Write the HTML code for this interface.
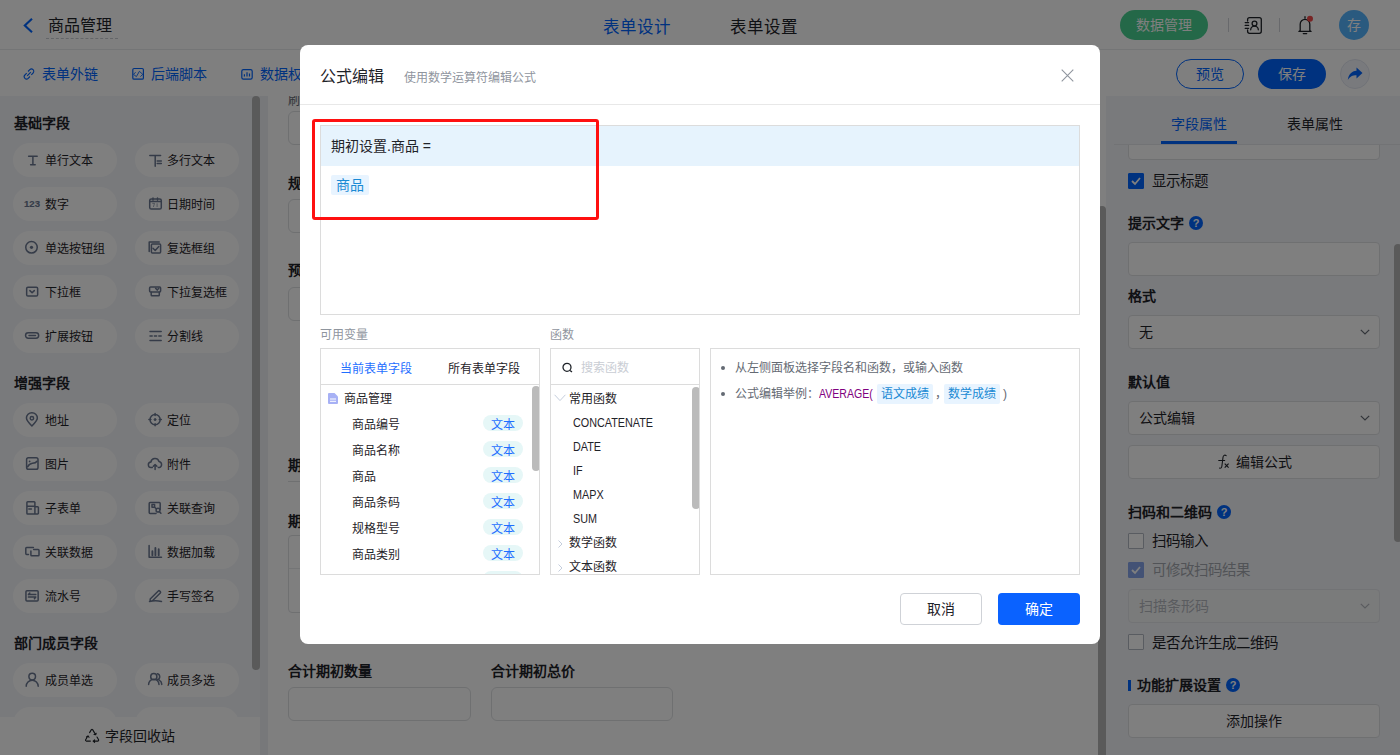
<!DOCTYPE html><html lang="zh-CN"><head><meta charset="utf-8"><style>
*{box-sizing:border-box;margin:0;padding:0}
html,body{width:1400px;height:755px;overflow:hidden;background:#fff;font-family:"Liberation Sans",sans-serif;color:#1f2329}
.a{position:absolute}
svg{display:block;overflow:visible}
.nw{white-space:nowrap}
.t12{font-size:12px;line-height:18px;white-space:nowrap}
.t13{font-size:13px;line-height:18px;white-space:nowrap}
.t14{font-size:14px;line-height:20px;white-space:nowrap}
.t16{font-size:16px;line-height:22px;white-space:nowrap}
.blue{color:#0064ff}
.chip{position:absolute;width:104px;height:34px;border-radius:17px;background:#fff}
.chip svg{position:absolute;left:11px;top:9px}
.chip span{position:absolute;left:32px;top:9px;font-size:12px;line-height:18px;color:#1f2329;white-space:nowrap}
.sec{position:absolute;left:14px;font-size:14px;font-weight:bold;line-height:20px;color:#1f2329;white-space:nowrap}
.inp{position:absolute;border:1px solid #dee0e3;border-radius:6px;background:#fff}
.lbl{position:absolute;font-size:14px;font-weight:bold;line-height:20px;color:#1f2329;white-space:nowrap}
.cb{position:absolute;width:16px;height:16px;border:1px solid #b3b8c2;border-radius:1px;background:#fff}
.q{position:absolute;width:14px;height:14px;border-radius:7px;background:#0064ff;color:#fff;font-size:11px;font-weight:bold;line-height:14px;text-align:center}
.chev{position:absolute}
.tag{position:absolute;width:40px;height:16px;border-radius:8px;background:#e6f7f7;color:#1f6fff;font-size:12px;line-height:20px;text-align:center;overflow:visible}
.vrow{position:absolute;left:31px;font-size:12px;line-height:18px;color:#1f2329;white-space:nowrap}
.fn{position:absolute;left:22px;transform:scaleX(.9);transform-origin:0 0;font-size:12px;line-height:18px;color:#1f2329;white-space:nowrap}
</style></head><body>
<div class="a" style="left:0;top:0;width:1400px;height:50px;background:#fff;border-bottom:1px solid #e8eaed"></div>
<svg class="a" style="left:22px;top:17px" width="12" height="17" viewBox="0 0 12 17"><path d="M10 1.8L2.8 8.5 10 15.2" fill="none" stroke="#0064ff" stroke-width="2.1"/></svg>
<div class="a t16" style="left:48px;top:15px">商品管理</div>
<div class="a" style="left:46px;top:38px;width:72px;border-top:1px dashed #c9ccd2"></div>
<div class="a t16 blue" style="left:603px;top:16px;font-size:16.5px">表单设计</div>
<div class="a t16" style="left:730px;top:16px;font-size:16.5px">表单设置</div>
<div class="a" style="left:1120px;top:10px;width:88px;height:30px;border-radius:15px;background:#48d090"></div>
<div class="a t14" style="left:1136px;top:15px;color:#fff">数据管理</div>
<div class="a" style="left:1228px;top:18px;width:1px;height:14px;background:#d0d3d8"></div>
<div class="a" style="left:1279px;top:18px;width:1px;height:14px;background:#d0d3d8"></div>
<svg class="a" style="left:1240px;top:12px" width="26" height="26" viewBox="1240 12 26 26"><path d="M1247.6 21V19.6a2 2 0 0 1 2-2h9.7a2 2 0 0 1 2 2v11.7a2 2 0 0 1-2 2h-9.7a2 2 0 0 1-2-2V30M1245.2 22.6h3.4M1245.2 25.4h3.4M1245.2 28.3h3.4" fill="none" stroke="#1f2329" stroke-width="1.3" stroke-linecap="round"/><circle cx="1254.5" cy="23.6" r="2.4" fill="none" stroke="#1f2329" stroke-width="1.3"/><path d="M1250.7 29.8a3.8 3.6 0 0 1 7.6 0" fill="none" stroke="#1f2329" stroke-width="1.3" stroke-linecap="round"/></svg>
<svg class="a" style="left:1292px;top:12px" width="26" height="26" viewBox="1292 12 26 26"><path d="M1300.2 30.4V24.2a4.8 4.8 0 0 1 9.6 0v6.2l1.3 1H1298.9z" fill="none" stroke="#1f2329" stroke-width="1.3" stroke-linejoin="round"/><path d="M1305 16.7v1.5M1303.3 33.6h3.4" stroke="#1f2329" stroke-width="1.3" stroke-linecap="round"/><circle cx="1310" cy="18.8" r="3" fill="#f04848"/></svg>
<div class="a" style="left:1339px;top:10px;width:30px;height:30px;border-radius:15px;background:#54b4ff"></div>
<div class="a t14" style="left:1347px;top:15px;color:#fff">存</div>
<div class="a" style="left:0;top:51px;width:1400px;height:45px;background:#fff"></div>
<svg class="a" style="left:23px;top:68px" width="12" height="12" viewBox="0 0 12 12"><path d="M5 3.5l1.8-1.8a2.3 2.3 0 0 1 3.3 3.3L8.3 6.8M7 8.5L5.2 10.3a2.3 2.3 0 0 1-3.3-3.3L3.7 5.2M4.2 7.8l3.6-3.6" fill="none" stroke="#0064ff" stroke-width="1.1"/></svg>
<div class="a t14 blue" style="left:42px;top:64px">表单外链</div>
<svg class="a" style="left:130px;top:66px" width="16" height="16" viewBox="130 66 16 16"><rect x="132.8" y="68.5" width="10.6" height="10.7" rx="1.3" fill="none" stroke="#0064ff" stroke-width="1.2"/><path d="M135.6 72.2L133.5 74.4 136.4 76.6 139.4 71.3 142.8 74.4 140.4 76.6" fill="none" stroke="#0064ff" stroke-width="0.9" stroke-linejoin="round"/></svg>
<div class="a t14 blue" style="left:151px;top:64px">后端脚本</div>
<svg class="a" style="left:239px;top:66px" width="16" height="16" viewBox="239 66 16 16"><rect x="241.8" y="69.6" width="10.4" height="9.6" rx="1.6" fill="none" stroke="#0064ff" stroke-width="1.2"/><path d="M244.4 74.3v2.3M247 72.3v4.3M249.5 73.5v3.1" stroke="#0064ff" stroke-width="1.2"/></svg>
<div class="a t14 blue" style="left:260px;top:64px">数据权限</div>
<div class="a" style="left:1176px;top:59px;width:68px;height:30px;border-radius:15px;border:1.5px solid #0064ff"></div>
<div class="a t14 blue" style="left:1196px;top:64px">预览</div>
<div class="a" style="left:1258px;top:59px;width:68px;height:30px;border-radius:15px;background:#0064ff"></div>
<div class="a t14" style="left:1278px;top:64px;color:#fff">保存</div>
<div class="a" style="left:1340px;top:59px;width:30px;height:30px;border-radius:15px;background:#f3f5fb;border:1px solid #e1e5ef"></div>
<svg class="a" style="left:1347px;top:67px" width="16" height="14" viewBox="0 0 16 14"><path d="M9.5 0.5L15.5 6 9.5 11.5V8.3C5.5 8.3 3 9.5 0.8 13 1.5 7.5 4.5 4.2 9.5 3.8z" fill="#0064ff"/></svg>
<div class="a" style="left:0;top:96px;width:260px;height:659px;background:#f3f5f9"></div>
<div class="a" style="left:260px;top:96px;width:8px;height:659px;background:#eff1f4"></div>
<div class="sec" style="top:113px">基础字段</div>
<div class="sec" style="top:373px">增强字段</div>
<div class="sec" style="top:633px">部门成员字段</div>
<div class="chip" style="left:13px;top:143px"><svg width="16" height="16" viewBox="0 0 16 16"><path d="M4.6 4.2h8.6M8.9 4.2v8.6M6.6 12.8h4.6" fill="none" stroke="#6a7790" stroke-width="1.5" stroke-linecap="round" stroke-linejoin="round"/></svg><span>单行文本</span></div>
<div class="chip" style="left:135px;top:143px"><svg width="16" height="16" viewBox="0 0 16 16"><path d="M3.8 3.4h10.8M9.2 3.4v10.8M11.2 9.1h4.1M11.2 11.6h4.1" fill="none" stroke="#6a7790" stroke-width="1.5" stroke-linecap="round" stroke-linejoin="round"/></svg><span>多行文本</span></div>
<div class="chip" style="left:13px;top:187px"><svg width="16" height="16" viewBox="0 0 16 16"><text x="0" y="11" font-size="9.6" font-weight="bold" fill="#6a7790" stroke="#6a7790" stroke-width="0.15" font-family="Liberation Sans">123</text></svg><span>数字</span></div>
<div class="chip" style="left:135px;top:187px"><svg width="16" height="16" viewBox="0 0 16 16"><rect x="3.7" y="2.9" width="11.6" height="10.2" rx="1.6" fill="none" stroke="#6a7790" stroke-width="1.5" stroke-linecap="round" stroke-linejoin="round"/><path d="M3.7 5.4h11.6M7 1.9v2M11.5 1.9v2" fill="none" stroke="#6a7790" stroke-width="1.5" stroke-linecap="round" stroke-linejoin="round"/><path d="M6.3 7.4h2.2L7.4 11M11.1 7.3v3.7" fill="none" stroke="#6a7790" stroke-width="0.8" opacity="0.8"/></svg><span>日期时间</span></div>
<div class="chip" style="left:13px;top:231px"><svg width="16" height="16" viewBox="0 0 16 16"><circle cx="7.5" cy="7.3" r="5.75" fill="none" stroke="#6a7790" stroke-width="1.5" stroke-linecap="round" stroke-linejoin="round"/><circle cx="7.5" cy="7.3" r="1.6" fill="#6a7790"/></svg><span>单选按钮组</span></div>
<div class="chip" style="left:135px;top:231px"><svg width="16" height="16" viewBox="0 0 16 16"><path d="M3.2 11.5V2h10" fill="none" stroke="#6a7790" stroke-width="1.5" stroke-linecap="round" stroke-linejoin="round"/><rect x="5.4" y="4.1" width="9.2" height="8.8" rx="1" fill="none" stroke="#6a7790" stroke-width="1.5" stroke-linecap="round" stroke-linejoin="round"/><path d="M7 8.3l2.2 2.2 3.6-3.9" fill="none" stroke="#6a7790" stroke-width="1.5" stroke-linecap="round" stroke-linejoin="round"/></svg><span>复选框组</span></div>
<div class="chip" style="left:13px;top:275px"><svg width="16" height="16" viewBox="0 0 16 16"><rect x="2.65" y="3.15" width="11" height="8.8" rx="1.3" fill="none" stroke="#6a7790" stroke-width="1.5" stroke-linecap="round" stroke-linejoin="round"/><path d="M5.9 6.6l2.2 2.2 2.2-2.2" fill="none" stroke="#6a7790" stroke-width="1.5" stroke-linecap="round" stroke-linejoin="round"/></svg><span>下拉框</span></div>
<div class="chip" style="left:135px;top:275px"><svg width="16" height="16" viewBox="0 0 16 16"><rect x="3.6" y="3.1" width="11" height="4.8" rx="1" fill="none" stroke="#6a7790" stroke-width="1.5" stroke-linecap="round" stroke-linejoin="round"/><path d="M5.2 8.2v2.8a0.8 0.8 0 0 0 .8.8h6.5a0.8 0.8 0 0 0 .8-.8V8.2" fill="none" stroke="#6a7790" stroke-width="1.5" stroke-linecap="round" stroke-linejoin="round"/><path d="M9.6 4.3l1.6 1.8 1.6-1.8" fill="none" stroke="#6a7790" stroke-width="1.5" stroke-linecap="round" stroke-linejoin="round"/></svg><span>下拉复选框</span></div>
<div class="chip" style="left:13px;top:319px"><svg width="16" height="16" viewBox="0 0 16 16"><rect x="1.55" y="4.85" width="13.1" height="5.4" rx="2.7" fill="none" stroke="#6a7790" stroke-width="1.5" stroke-linecap="round" stroke-linejoin="round"/><path d="M5 7.6h6.5" fill="none" stroke="#6a7790" stroke-width="1.5" stroke-linecap="round" stroke-linejoin="round"/></svg><span>扩展按钮</span></div>
<div class="chip" style="left:135px;top:319px"><svg width="16" height="16" viewBox="0 0 16 16"><path d="M4 3.6h11.2M4 12.4h11.2M4 8.1h2.2M8.4 8.1h2.2M12.8 8.1h2.4" fill="none" stroke="#6a7790" stroke-width="1.5" stroke-linecap="round" stroke-linejoin="round"/></svg><span>分割线</span></div>
<div class="chip" style="left:13px;top:403px"><svg width="16" height="16" viewBox="0 0 16 16"><path d="M7.9 14C4.8 11 2.45 8.6 2.45 6.1a5.45 5.45 0 0 1 10.9 0c0 2.5-2.35 4.9-5.45 7.9z" fill="none" stroke="#6a7790" stroke-width="1.5" stroke-linecap="round" stroke-linejoin="round"/><circle cx="7.9" cy="6.3" r="1.7" fill="none" stroke="#6a7790" stroke-width="1.5" stroke-linecap="round" stroke-linejoin="round"/></svg><span>地址</span></div>
<div class="chip" style="left:135px;top:403px"><svg width="16" height="16" viewBox="0 0 16 16"><circle cx="9.1" cy="7.6" r="5.1" fill="none" stroke="#6a7790" stroke-width="1.5" stroke-linecap="round" stroke-linejoin="round"/><circle cx="9.1" cy="7.6" r="1" fill="#6a7790" stroke="#6a7790"/><path d="M9.1 1.4v2M9.1 11.8v2M2.9 7.6h2M13.3 7.6h2" fill="none" stroke="#6a7790" stroke-width="1.5" stroke-linecap="round" stroke-linejoin="round"/></svg><span>定位</span></div>
<div class="chip" style="left:13px;top:447px"><svg width="16" height="16" viewBox="0 0 16 16"><rect x="2.6" y="1.75" width="11.4" height="11.5" rx="1.8" fill="none" stroke="#6a7790" stroke-width="1.5" stroke-linecap="round" stroke-linejoin="round"/><path d="M3.6 10.8C5 8 6.5 7.5 8.5 7.3 10.5 7.1 12 6.6 13 5.2" fill="none" stroke="#6a7790" stroke-width="1.5" stroke-linecap="round" stroke-linejoin="round"/><circle cx="5.6" cy="5.4" r="0.9" fill="#6a7790"/></svg><span>图片</span></div>
<div class="chip" style="left:135px;top:447px"><svg width="16" height="16" viewBox="0 0 16 16"><path d="M6.3 11.6H5.4a2.8 2.8 0 0 1-.5-5.6 4.2 4.2 0 0 1 8.1-.6 3.2 3.2 0 0 1 .3 6.2h-1M9.1 13.5V8.6M7.3 10.3l1.8-1.8 1.8 1.8" fill="none" stroke="#6a7790" stroke-width="1.5" stroke-linecap="round" stroke-linejoin="round"/></svg><span>附件</span></div>
<div class="chip" style="left:13px;top:491px"><svg width="16" height="16" viewBox="0 0 16 16"><path d="M10.9 6.8V2.6a0.8 0.8 0 0 0-.8-.8H3.7a0.8 0.8 0 0 0-.8.8v10.6a0.8 0.8 0 0 0 .8.8h9.9a0.8 0.8 0 0 0 .8-.8V7.6a0.8 0.8 0 0 0-.8-.8h-2.7v7.2M2.9 6.3h8M4.8 8.9h2.6" fill="none" stroke="#6a7790" stroke-width="1.5" stroke-linecap="round" stroke-linejoin="round"/></svg><span>子表单</span></div>
<div class="chip" style="left:135px;top:491px"><svg width="16" height="16" viewBox="0 0 16 16"><path d="M10 13.4H4a0.8 0.8 0 0 1-.8-.8V3.4a0.8 0.8 0 0 1 .8-.8h9.4a0.8 0.8 0 0 1 .8.8v6" fill="none" stroke="#6a7790" stroke-width="1.5" stroke-linecap="round" stroke-linejoin="round"/><rect x="6" y="4.5" width="2.6" height="2.8" fill="none" stroke="#6a7790" stroke-width="1.5" stroke-linecap="round" stroke-linejoin="round"/><circle cx="12" cy="10.2" r="1.9" fill="none" stroke="#6a7790" stroke-width="1.5" stroke-linecap="round" stroke-linejoin="round"/><path d="M13.4 11.7l1.5 1.6M8.6 7.3l1.6 1.4" fill="none" stroke="#6a7790" stroke-width="1.5" stroke-linecap="round" stroke-linejoin="round"/></svg><span>关联查询</span></div>
<div class="chip" style="left:13px;top:535px"><svg width="16" height="16" viewBox="0 0 16 16"><path d="M9.4 3.5H2.6a0.8 0.8 0 0 0-.8.8v5.3a0.8 0.8 0 0 0 .8.8H4.5M6.9 7v3.9a0.8 0.8 0 0 0 .8.8h6.5a0.8 0.8 0 0 0 .8-.8V6.3a0.8 0.8 0 0 0-.8-.8H9.6" fill="none" stroke="#6a7790" stroke-width="1.5" stroke-linecap="round" stroke-linejoin="round"/></svg><span>关联数据</span></div>
<div class="chip" style="left:135px;top:535px"><svg width="16" height="16" viewBox="0 0 16 16"><path d="M3.1 1.5v11.7h12.4" fill="none" stroke="#6a7790" stroke-width="1.5" stroke-linecap="round" stroke-linejoin="round"/><path d="M6.4 7.3v3.9M9.4 3.9v7.3M12.7 5.2v6" fill="none" stroke="#6a7790" stroke-width="1.9" stroke-linecap="round"/></svg><span>数据加载</span></div>
<div class="chip" style="left:13px;top:579px"><svg width="16" height="16" viewBox="0 0 16 16"><rect x="1.95" y="2.65" width="12.2" height="10.4" rx="1" fill="none" stroke="#6a7790" stroke-width="1.5" stroke-linecap="round" stroke-linejoin="round"/><path d="M4.4 6.6h7.4M4.4 9.1h7.4M5.8 5l-1.4 1.6M10.4 10.7l1.4-1.6" fill="none" stroke="#6a7790" stroke-width="1.5" stroke-linecap="round" stroke-linejoin="round"/></svg><span>流水号</span></div>
<div class="chip" style="left:135px;top:579px"><svg width="16" height="16" viewBox="0 0 16 16"><path d="M4.2 11L12.3 3a1 1 0 0 1 1.4 0l.6.6a1 1 0 0 1 0 1.4L6.2 13H4.2zM3.5 13.4c4-1 8-1 12 0" fill="none" stroke="#6a7790" stroke-width="1.5" stroke-linecap="round" stroke-linejoin="round"/></svg><span>手写签名</span></div>
<div class="chip" style="left:13px;top:663px"><svg width="16" height="16" viewBox="0 0 16 16"><circle cx="8.2" cy="4.6" r="3.3" fill="none" stroke="#6a7790" stroke-width="1.5" stroke-linecap="round" stroke-linejoin="round"/><path d="M2.2 14.2a6 6 0 0 1 12 0" fill="none" stroke="#6a7790" stroke-width="1.5" stroke-linecap="round" stroke-linejoin="round"/></svg><span>成员单选</span></div>
<div class="chip" style="left:135px;top:663px"><svg width="16" height="16" viewBox="0 0 16 16"><circle cx="7.8" cy="4.7" r="3.1" fill="none" stroke="#6a7790" stroke-width="1.5" stroke-linecap="round" stroke-linejoin="round"/><path d="M2.6 12.4a5.2 5.2 0 0 1 10.4 0M11.4 1.7a3.1 3.1 0 0 1 0 6M13.2 8.2a5 5 0 0 1 2.6 4.2" fill="none" stroke="#6a7790" stroke-width="1.5" stroke-linecap="round" stroke-linejoin="round"/></svg><span>成员多选</span></div>
<div class="chip" style="left:13px;top:707px"></div><div class="chip" style="left:135px;top:707px"></div>
<div class="a" style="left:252px;top:96px;width:8px;height:574px;border-radius:4px;background:#b4b4b4"></div>
<div class="a" style="left:0;top:717px;width:260px;height:38px;background:#fff"></div>
<svg class="a" style="left:84px;top:727px" width="16" height="16" viewBox="84 727 16 16"><path d="M89.6 732.6L91.4 729.6Q92 728.9 92.6 729.6L95.6 734.6M94 734.5l1.7.3.5-1.6M97 737l1.6 2.8q.3.9-.6 1.3H93.2M94.6 739.8l-1.5 1.3 1.5 1.2M90.4 741.1H86.2q-.9-.3-.7-1.1l2.3-4M86.5 737l1.5-1.1 1 1.4" fill="none" stroke="#1f2329" stroke-width="1.1" stroke-linecap="round" stroke-linejoin="round"/></svg>
<div class="a t14" style="left:104.5px;top:726px">字段回收站</div>
<div class="a" style="left:268px;top:96px;width:838px;height:659px;background:#fff"></div>
<div class="a" style="left:268px;top:96px;width:200px;height:20px;overflow:hidden"><div class="a t12" style="left:20px;top:-4px;color:#646a73">刷新规则</div></div>
<div class="inp" style="left:288px;top:111px;width:790px;height:34px"></div>
<div class="lbl" style="left:288px;top:173px">规格型号</div>
<div class="inp" style="left:288px;top:199px;width:790px;height:34px"></div>
<div class="lbl" style="left:288px;top:260px">预设值</div>
<div class="inp" style="left:288px;top:287px;width:790px;height:34px"></div>
<div class="lbl" style="left:288px;top:455px">期初设置</div>
<div class="a" style="left:288px;top:481px;width:790px;height:1px;background:#dee0e3"></div>
<div class="lbl" style="left:288px;top:511px">期初明细</div>
<div class="inp" style="left:288px;top:535px;width:790px;height:78px;border-radius:4px"></div>
<div class="a" style="left:289px;top:568px;width:788px;height:1px;background:#e8eaed"></div>
<div class="lbl" style="left:288px;top:661px">合计期初数量</div>
<div class="inp" style="left:288px;top:687px;width:183px;height:34px"></div>
<div class="lbl" style="left:491px;top:661px">合计期初总价</div>
<div class="inp" style="left:491px;top:687px;width:182px;height:34px"></div>
<div class="a" style="left:1098px;top:206px;width:8px;height:560px;border-radius:4px;background:#b4b4b4"></div>
<div class="a" style="left:1106px;top:96px;width:294px;height:659px;background:#f3f5f9"></div>
<div class="a t14 blue" style="left:1171px;top:114px">字段属性</div>
<div class="a t14" style="left:1287px;top:114px">表单属性</div>
<div class="a" style="left:1114px;top:144px;width:286px;height:1px;background:#e4e6ea"></div>
<div class="a" style="left:1161px;top:141px;width:76px;height:3px;background:#0064ff"></div>
<div class="inp" style="left:1128px;top:120px;width:252px;height:40px;border-radius:4px"></div>
<div class="a" style="left:1106px;top:96px;width:294px;height:48px;background:#f3f5f9"></div>
<div class="a t14 blue" style="left:1171px;top:114px">字段属性</div>
<div class="a t14" style="left:1287px;top:114px">表单属性</div>
<div class="a" style="left:1114px;top:144px;width:286px;height:1px;background:#e4e6ea"></div>
<div class="a" style="left:1161px;top:141px;width:76px;height:3px;background:#0064ff"></div>
<div class="cb" style="left:1128px;top:173px;background:#0064ff;border-color:#0064ff"><svg width="14" height="14" viewBox="0 0 14 14"><path d="M3 7l3 3 5-6" fill="none" stroke="#fff" stroke-width="1.8"/></svg></div>
<div class="a t14" style="left:1152px;top:171px;font-size:14.5px">显示标题</div>
<div class="lbl" style="left:1128px;top:213px">提示文字</div>
<div class="q" style="left:1189px;top:216px">?</div>
<div class="inp" style="left:1128px;top:242px;width:252px;height:34px;border-radius:4px"></div>
<div class="lbl" style="left:1128px;top:286px">格式</div>
<div class="inp" style="left:1128px;top:315px;width:252px;height:34px;border-radius:4px"></div>
<div class="a t14" style="left:1139px;top:322px">无</div>
<svg class="chev" style="left:1360px;top:329px" width="10" height="6" viewBox="0 0 10 6"><path d="M0.8 0.8L5 5 9.2 0.8" fill="none" stroke="#646a73" stroke-width="1.2"/></svg>
<div class="lbl" style="left:1128px;top:372px">默认值</div>
<div class="inp" style="left:1128px;top:401px;width:252px;height:34px;border-radius:4px"></div>
<div class="a t14" style="left:1139px;top:408px">公式编辑</div>
<svg class="chev" style="left:1360px;top:415px" width="10" height="6" viewBox="0 0 10 6"><path d="M0.8 0.8L5 5 9.2 0.8" fill="none" stroke="#646a73" stroke-width="1.2"/></svg>
<div class="inp" style="left:1128px;top:445px;width:252px;height:34px;border-radius:4px"></div>
<svg class="a" style="left:1216px;top:452px" width="16" height="18" viewBox="1216 452 16 18"><path d="M1226.2 455.6C1224.6 454.5 1223.2 455.4 1223 457.4L1221.9 466C1221.7 467.7 1220.8 468.4 1219.5 468.1M1218.7 460.4h6" fill="none" stroke="#1f2329" stroke-width="1.05" stroke-linecap="round"/><path d="M1224.7 463.6l3.9 4.1M1228.6 463.6l-3.9 4.1" fill="none" stroke="#1f2329" stroke-width="1.1"/></svg>
<div class="a t14" style="left:1236px;top:452px">编辑公式</div>
<div class="lbl" style="left:1128px;top:502px">扫码和二维码</div>
<div class="q" style="left:1217px;top:505px">?</div>
<div class="cb" style="left:1128px;top:533px"></div>
<div class="a t14" style="left:1152px;top:531px;font-size:14.5px">扫码输入</div>
<div class="cb" style="left:1128px;top:562px;background:#86a5eb;border-color:#86a5eb"><svg width="14" height="14" viewBox="0 0 14 14"><path d="M3 7l3 3 5-6" fill="none" stroke="#fff" stroke-width="1.8"/></svg></div>
<div class="a t14" style="left:1152px;top:560px;font-size:14.5px;color:#a3a7ae">可修改扫码结果</div>
<div class="inp" style="left:1128px;top:589px;width:252px;height:34px;border-radius:4px;background:#f5f6f7;border-color:#e4e6ea"></div>
<div class="a t14" style="left:1139px;top:596px;color:#b4b8be">扫描条形码</div>
<svg class="chev" style="left:1360px;top:603px" width="10" height="6" viewBox="0 0 10 6"><path d="M0.8 0.8L5 5 9.2 0.8" fill="none" stroke="#b4b8be" stroke-width="1.2"/></svg>
<div class="cb" style="left:1128px;top:634px"></div>
<div class="a t14" style="left:1152px;top:633px;font-size:14.5px">是否允许生成二维码</div>
<div class="a" style="left:1128px;top:680px;width:3px;height:11px;background:#0064ff"></div>
<div class="lbl" style="left:1137px;top:675px">功能扩展设置</div>
<div class="q" style="left:1226px;top:678px">?</div>
<div class="inp" style="left:1128px;top:704px;width:252px;height:34px;border-radius:4px"></div>
<div class="a t14" style="left:1226px;top:711px">添加操作</div>
<div class="a" style="left:1394px;top:244px;width:8px;height:298px;border-radius:4px;background:#b4b4b4"></div>
<div class="a" style="left:0;top:0;width:1400px;height:755px;background:rgba(0,0,0,.5)"></div>
<div class="a" style="left:300px;top:45px;width:800px;height:599px;background:#fff;border-radius:8px"></div>
<div class="a t16" style="left:320px;top:66px;color:#1f2329">公式编辑</div>
<div class="a t12" style="left:404px;top:69px;color:#8f959e">使用数学运算符编辑公式</div>
<svg class="a" style="left:1061px;top:69px" width="13" height="13" viewBox="0 0 13 13"><path d="M0.7 0.7l11.6 11.6M12.3 0.7L0.7 12.3" stroke="#8f959e" stroke-width="1.1"/></svg>
<div class="a" style="left:300px;top:104px;width:800px;height:1px;background:#e8e8e8"></div>
<div class="a" style="left:320px;top:125px;width:760px;height:190px;border:1px solid #dcdcdc;background:#fff"></div>
<div class="a" style="left:321px;top:126px;width:758px;height:40px;background:#e6f3fd"></div>
<div class="a t14" style="left:331px;top:136px;color:#1f2329">期初设置.商品 =</div>
<div class="a" style="left:331px;top:175px;width:38px;height:20px;border-radius:2px;background:#e8f4ff"></div>
<div class="a t14" style="left:336px;top:175px;color:#1a8ad4">商品</div>
<div class="a" style="left:312px;top:119px;width:287px;height:101px;border:3px solid #ff1010;border-radius:3px"></div>
<div class="a t12" style="left:320px;top:326px;color:#8f959e">可用变量</div>
<div class="a t12" style="left:550px;top:326px;color:#8f959e">函数</div>
<div class="a" style="left:320px;top:348px;width:220px;height:227px;border:1px solid #dcdcdc;overflow:hidden">
<div class="a t12" style="left:19px;top:11px;color:#1f6fff">当前表单字段</div>
<div class="a t12" style="left:127px;top:11px">所有表单字段</div>
<div class="a" style="left:0;top:35px;width:218px;height:1px;background:#dcdcdc"></div>
<svg class="a" style="left:7px;top:44px" width="10" height="11" viewBox="0 0 10 11"><path d="M0 1a1 1 0 0 1 1-1h5.5L10 3.5V10a1 1 0 0 1-1 1H1a1 1 0 0 1-1-1z" fill="#a7b1f5"/><path d="M2 6h6M2 8.3h6" stroke="#fff" stroke-width="1"/></svg>
<div class="vrow" style="left:23px;top:41px">商品管理</div>
<div class="vrow" style="top:67px">商品编号</div>
<div class="tag" style="left:162px;top:66px">文本</div>
<div class="vrow" style="top:93px">商品名称</div>
<div class="tag" style="left:162px;top:92px">文本</div>
<div class="vrow" style="top:119px">商品</div>
<div class="tag" style="left:162px;top:118px">文本</div>
<div class="vrow" style="top:145px">商品条码</div>
<div class="tag" style="left:162px;top:144px">文本</div>
<div class="vrow" style="top:171px">规格型号</div>
<div class="tag" style="left:162px;top:170px">文本</div>
<div class="vrow" style="top:197px">商品类别</div>
<div class="tag" style="left:162px;top:196px">文本</div>
<div class="vrow" style="top:223px">计量单位</div>
<div class="tag" style="left:162px;top:222px">文本</div>
<div class="a" style="left:211px;top:37px;width:8px;height:85px;border-radius:4px;background:#bbbbbb"></div>
</div>
<div class="a" style="left:550px;top:348px;width:150px;height:227px;border:1px solid #dcdcdc;overflow:hidden">
<svg class="a" style="left:11px;top:13px" width="11" height="11" viewBox="0 0 11 10"><circle cx="5" cy="4.8" r="4" fill="none" stroke="#1f2329" stroke-width="1.3"/><path d="M8 8l2 1.5" stroke="#1f2329" stroke-width="1.3"/></svg>
<div class="a t12" style="left:30px;top:10px;color:#c9cdd4">搜索函数</div>
<div class="a" style="left:0;top:35px;width:148px;height:1px;background:#dcdcdc"></div>
<svg class="a" style="left:3px;top:45px" width="12" height="8" viewBox="0 0 12 8"><path d="M0.6 0.8L6 6.6 11.4 0.8" fill="none" stroke="#c5cedd" stroke-width="1"/></svg>
<div class="a t12" style="left:18px;top:41px">常用函数</div>
<div class="fn" style="top:65px">CONCATENATE</div>
<div class="fn" style="top:89px">DATE</div>
<div class="fn" style="top:113px">IF</div>
<div class="fn" style="top:137px">MAPX</div>
<div class="fn" style="top:161px">SUM</div>
<svg class="a" style="left:7px;top:191px" width="5" height="8" viewBox="0 0 5 8"><path d="M0.5 0.5L4 4 0.5 7.5" fill="none" stroke="#c5cedd" stroke-width="1"/></svg>
<div class="a t12" style="left:18px;top:185px">数学函数</div>
<svg class="a" style="left:7px;top:215px" width="5" height="8" viewBox="0 0 5 8"><path d="M0.5 0.5L4 4 0.5 7.5" fill="none" stroke="#c5cedd" stroke-width="1"/></svg>
<div class="a t12" style="left:18px;top:209px">文本函数</div>
<div class="a" style="left:141px;top:38px;width:8px;height:122px;border-radius:4px;background:#bbbbbb"></div>
</div>
<div class="a" style="left:710px;top:348px;width:370px;height:227px;border:1px solid #dcdcdc"></div>
<div class="a" style="left:721px;top:366px;width:4px;height:4px;border-radius:2px;background:#646a73"></div>
<div class="a t12" style="left:735px;top:359px;color:#646a73">从左侧面板选择字段名和函数，或输入函数</div>
<div class="a" style="left:721px;top:392px;width:4px;height:4px;border-radius:2px;background:#646a73"></div>
<div class="a t12" style="left:735px;top:385px;color:#646a73">公式编辑举例：<span style="color:#800080;display:inline-block;transform:scaleX(.88);transform-origin:0 0">AVERAGE(</span></div>
<div class="a" style="left:877px;top:384px;width:56px;height:20px;border-radius:2px;background:#e8f4ff"></div>
<div class="a t12" style="left:881px;top:385px;color:#1a8ad4">语文成绩</div>
<div class="a t12" style="left:935px;top:385px;color:#646a73">，</div>
<div class="a" style="left:944px;top:384px;width:56px;height:20px;border-radius:2px;background:#e8f4ff"></div>
<div class="a t12" style="left:948px;top:385px;color:#1a8ad4">数学成绩</div>
<div class="a t12" style="left:1003px;top:385px;color:#646a73">)</div>
<div class="a" style="left:900px;top:593px;width:82px;height:32px;border:1px solid #cfd2d7;border-radius:4px;background:#fff"></div>
<div class="a t14" style="left:927px;top:599px">取消</div>
<div class="a" style="left:998px;top:593px;width:82px;height:32px;border-radius:4px;background:#0a62ff"></div>
<div class="a t14" style="left:1025px;top:599px;color:#fff;font-weight:500">确定</div>
</body></html>
